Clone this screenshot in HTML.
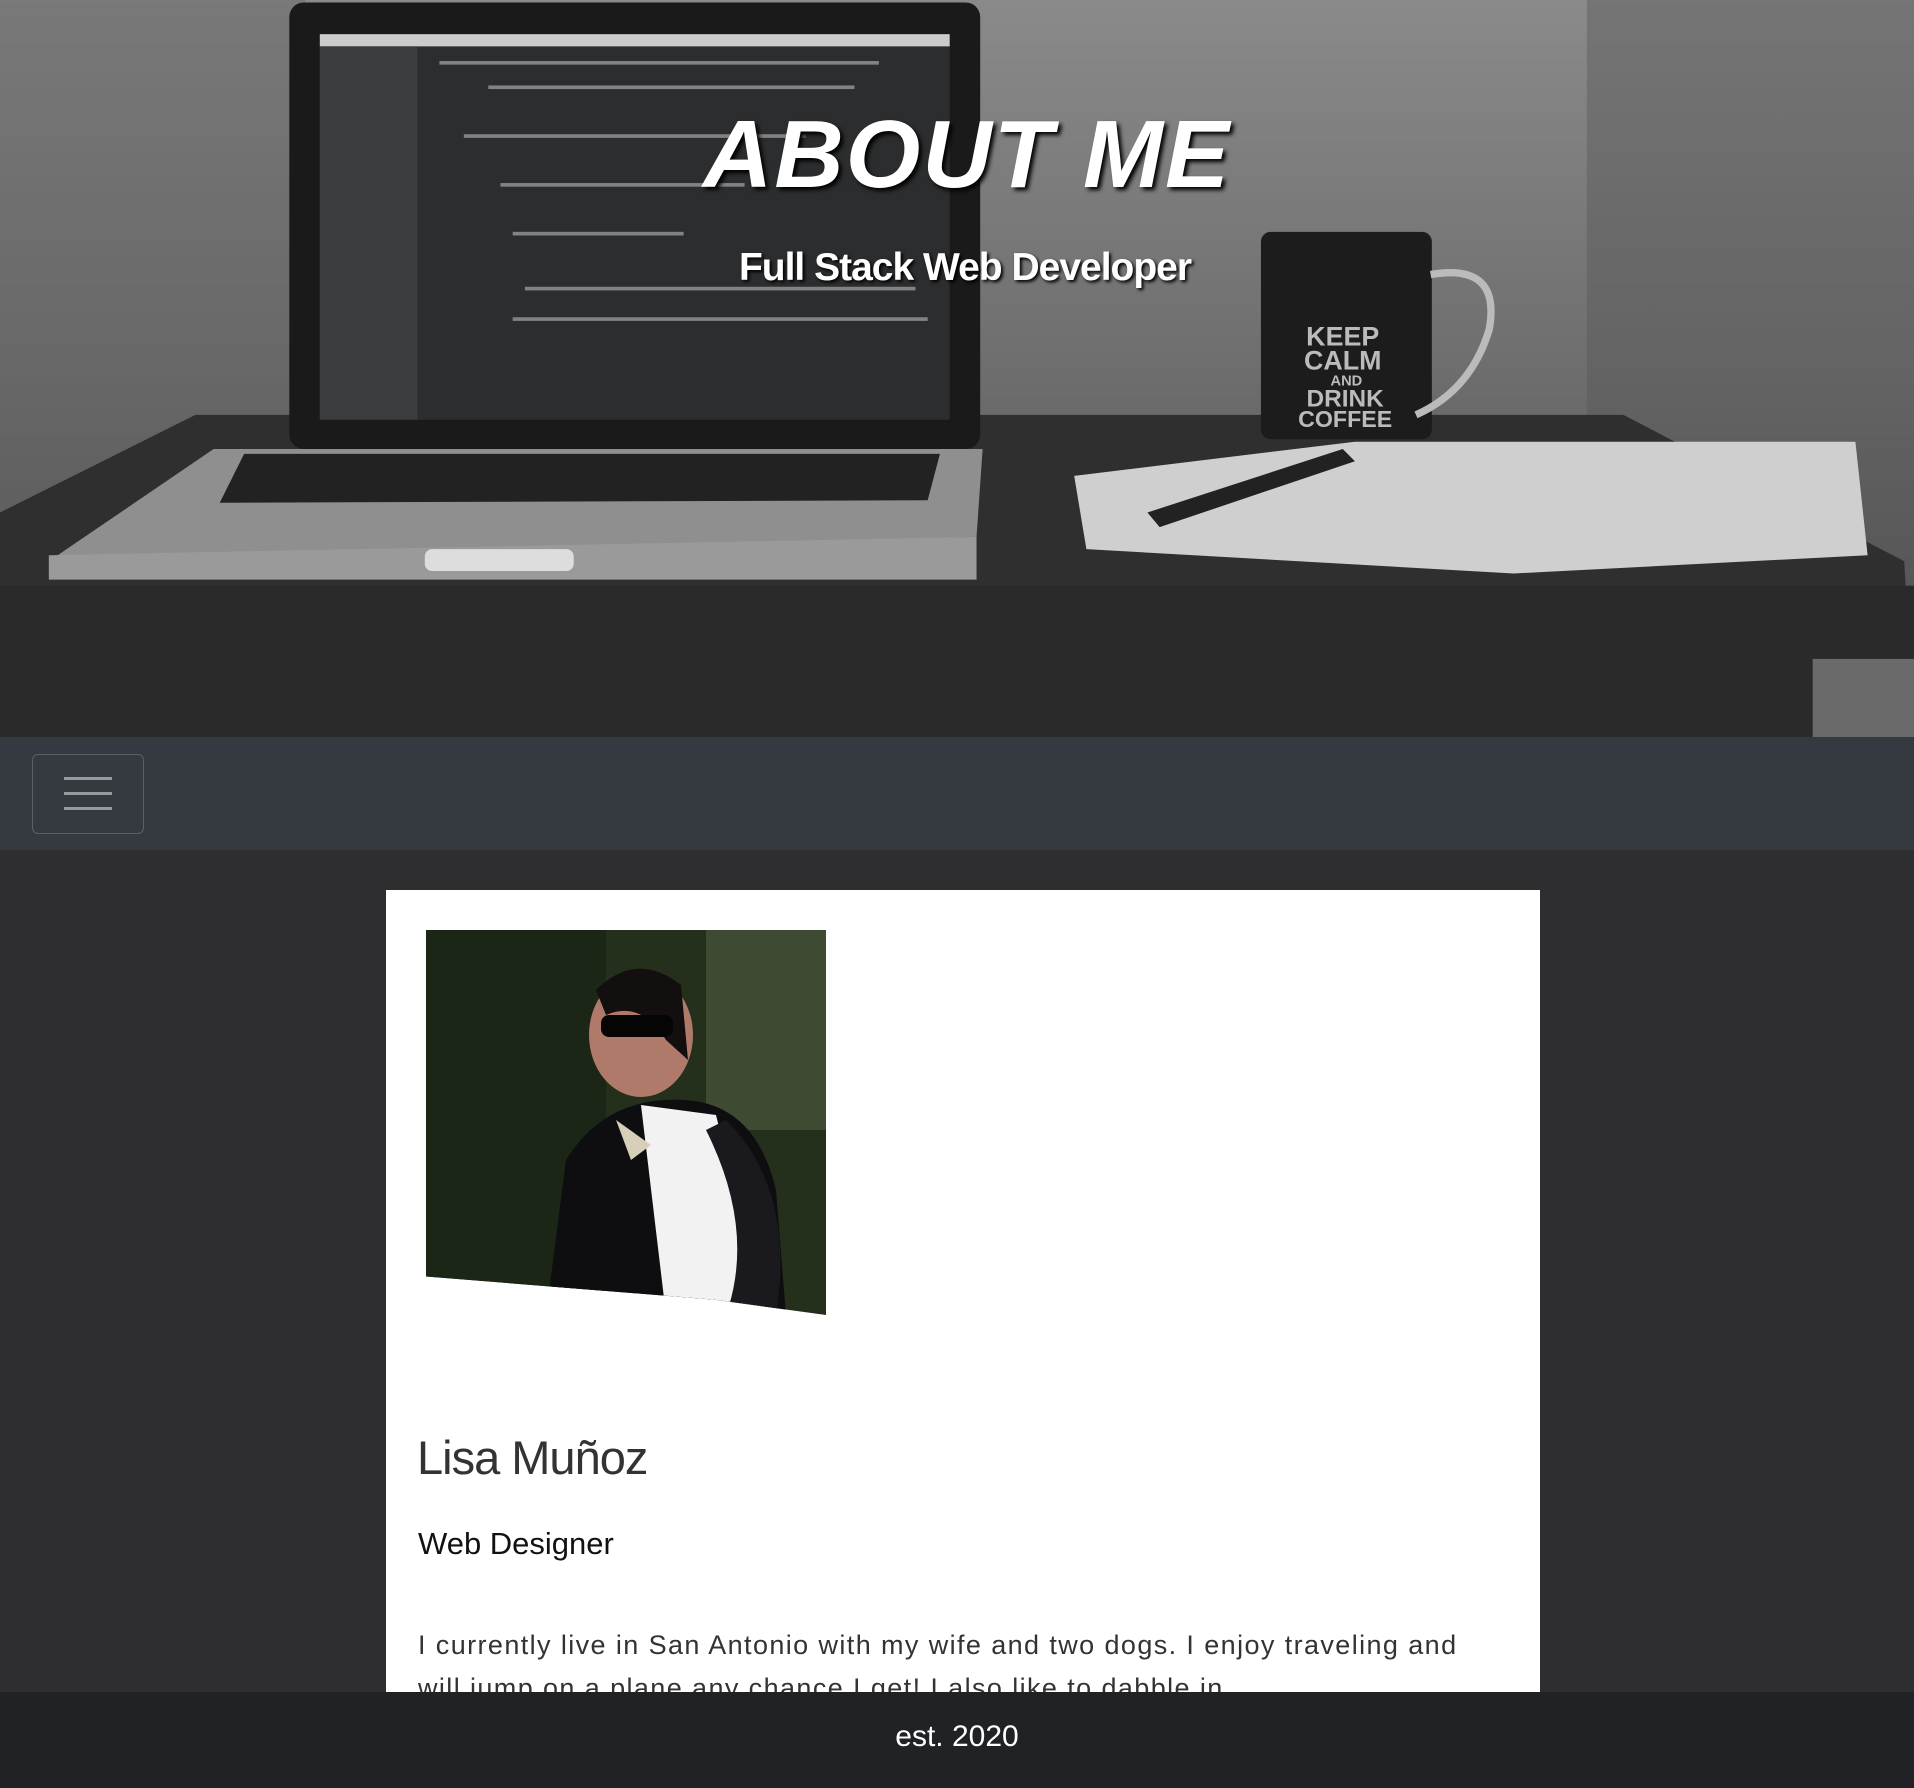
<!DOCTYPE html>
<html><head><meta charset="utf-8"><style>
body{margin:0;width:1914px;height:1788px;background:#2e2d30;overflow:hidden;font-family:"Liberation Sans",sans-serif;position:relative}
.hdr{position:absolute;left:0;top:0;width:1914px;height:737px}
.t1{position:absolute;left:10px;width:1914px;text-align:center;top:100px;font-size:96px;font-weight:bold;font-style:italic;color:#fff;letter-spacing:2px;text-shadow:3px 3px 4px #000}
.t2{position:absolute;left:8px;width:1914px;text-align:center;top:246px;font-size:39px;font-weight:bold;color:#fff;text-shadow:2px 2px 3px #000;letter-spacing:-1px}
.nav{position:absolute;left:0;top:737px;width:1914px;height:113px;background:#343a40}
.tog{position:absolute;left:32px;top:17px;width:112px;height:80px;border:1px solid #5a6066;border-radius:6px;box-sizing:border-box}
.tog i{position:absolute;left:31px;width:48px;height:3px;background:#999}
.card{position:absolute;left:386px;top:890px;width:1154px;height:802px;background:#fff;overflow:hidden}
.photo{position:absolute;left:40px;top:40px;width:400px;height:385px;clip-path:polygon(0 0,100% 0,100% 100%,72% 96%,0 90%)}
</style></head><body>
<div class="hdr"><svg width="1914" height="737" viewBox="0 0 1568 604" preserveAspectRatio="none">
<defs><linearGradient id="w" x1="0" y1="0" x2="0" y2="1"><stop offset="0" stop-color="#8a8a8a"/><stop offset=".5" stop-color="#6e6e6e"/><stop offset="1" stop-color="#4a4a4a"/></linearGradient></defs>
<rect width="1568" height="604" fill="url(#w)"/>
<rect x="0" y="0" width="250" height="604" fill="#5e5e5e" opacity=".4"/>
<rect x="1300" y="0" width="268" height="604" fill="#555" opacity=".4"/>
<polygon points="160,340 1330,340 1560,460 1568,604 0,604 0,420" fill="#2f2f2f"/>
<rect x="0" y="480" width="1568" height="124" fill="#2a2a2a"/>
<rect x="1485" y="540" width="83" height="64" fill="#6a6a6a"/>
<rect x="237" y="2" width="566" height="366" rx="12" fill="#1a1a1a"/>
<rect x="262" y="28" width="516" height="316" fill="#2b2d2f"/>
<rect x="262" y="28" width="516" height="10" fill="#ccc"/>
<rect x="262" y="38" width="80" height="306" fill="#3a3c3e"/>
<g fill="#bbb" opacity=".6"><rect x="360" y="50" width="360" height="3"/><rect x="400" y="70" width="300" height="3"/><rect x="380" y="110" width="280" height="3"/><rect x="410" y="150" width="200" height="3"/><rect x="420" y="190" width="140" height="3"/><rect x="430" y="235" width="320" height="3"/><rect x="420" y="260" width="340" height="3"/></g>
<polygon points="175,368 805,368 800,440 40,460" fill="#8f8f8f"/>
<polygon points="200,372 770,372 760,410 180,412" fill="#222"/>
<polygon points="40,455 800,440 800,475 40,475" fill="#9a9a9a"/>
<rect x="348" y="450" width="122" height="18" rx="6" fill="#ddd"/>
<polygon points="880,390 1110,362 1520,362 1530,455 1240,470 890,450" fill="#cfcfcf"/>
<polygon points="940,420 1100,368 1110,378 950,432" fill="#222"/>
<rect x="1033" y="190" width="140" height="170" rx="8" fill="#1c1c1c"/>
<path d="M1172 225 Q1230 215 1220 270 Q1205 320 1160 340" stroke="#bbb" stroke-width="6" fill="none"/>
<g fill="#bbb" font-family="Liberation Sans" font-weight="bold" text-anchor="middle"><text x="1100" y="283" font-size="22">KEEP</text><text x="1100" y="303" font-size="22">CALM</text><text x="1103" y="316" font-size="12">AND</text><text x="1102" y="333" font-size="20">DRINK</text><text x="1102" y="350" font-size="19">COFFEE</text></g>
</svg>
<div class="t1">ABOUT ME</div>
<div class="t2">Full Stack Web Developer</div>
</div>
<div class="nav"><div class="tog"><i style="top:22px"></i><i style="top:37px"></i><i style="top:52px"></i></div></div>
<div class="card">
<svg class="photo" viewBox="0 0 400 385" preserveAspectRatio="none">
<rect width="400" height="385" fill="#25301c"/>
<rect x="0" y="0" width="180" height="385" fill="#1c2616"/>
<rect x="280" y="0" width="120" height="200" fill="#3e4a32"/>
<ellipse cx="215" cy="105" rx="52" ry="62" fill="#b07a6a"/>
<path d="M170 60 Q210 20 255 55 L262 130 L240 110 Q215 70 180 85 Z" fill="#140f0f"/>
<rect x="175" y="85" width="72" height="22" rx="8" fill="#050505"/>
<path d="M120 385 L140 230 Q180 165 260 170 Q330 175 350 260 L360 385 Z" fill="#0e0e10"/>
<path d="M215 175 L290 185 L340 385 L240 385 Z" fill="#f2f2f2"/>
<path d="M190 190 L225 215 L205 230 Z" fill="#d8cfb8"/>
<path d="M280 200 Q330 300 300 385 L350 385 Q370 260 300 190 Z" fill="#1a1a1e"/>
</svg>
<div style="position:absolute;left:31px;top:540px;font-size:47px;color:#333;letter-spacing:-1px">Lisa Muñoz</div>
<div style="position:absolute;left:32px;top:636px;font-size:31px;color:#111">Web Designer</div>
<div style="position:absolute;left:32px;top:734px;width:1085px;font-size:27px;line-height:43px;color:#333;letter-spacing:1.4px">I currently live in San Antonio with my wife and two dogs. I enjoy traveling and will jump on a plane any chance I get! I also like to dabble in</div>
</div>
<div style="position:absolute;left:0;top:1692px;width:1914px;height:96px;background:#212226;color:#fff;font-size:30px;text-align:center;line-height:90px">est. 2020</div>
</body></html>
